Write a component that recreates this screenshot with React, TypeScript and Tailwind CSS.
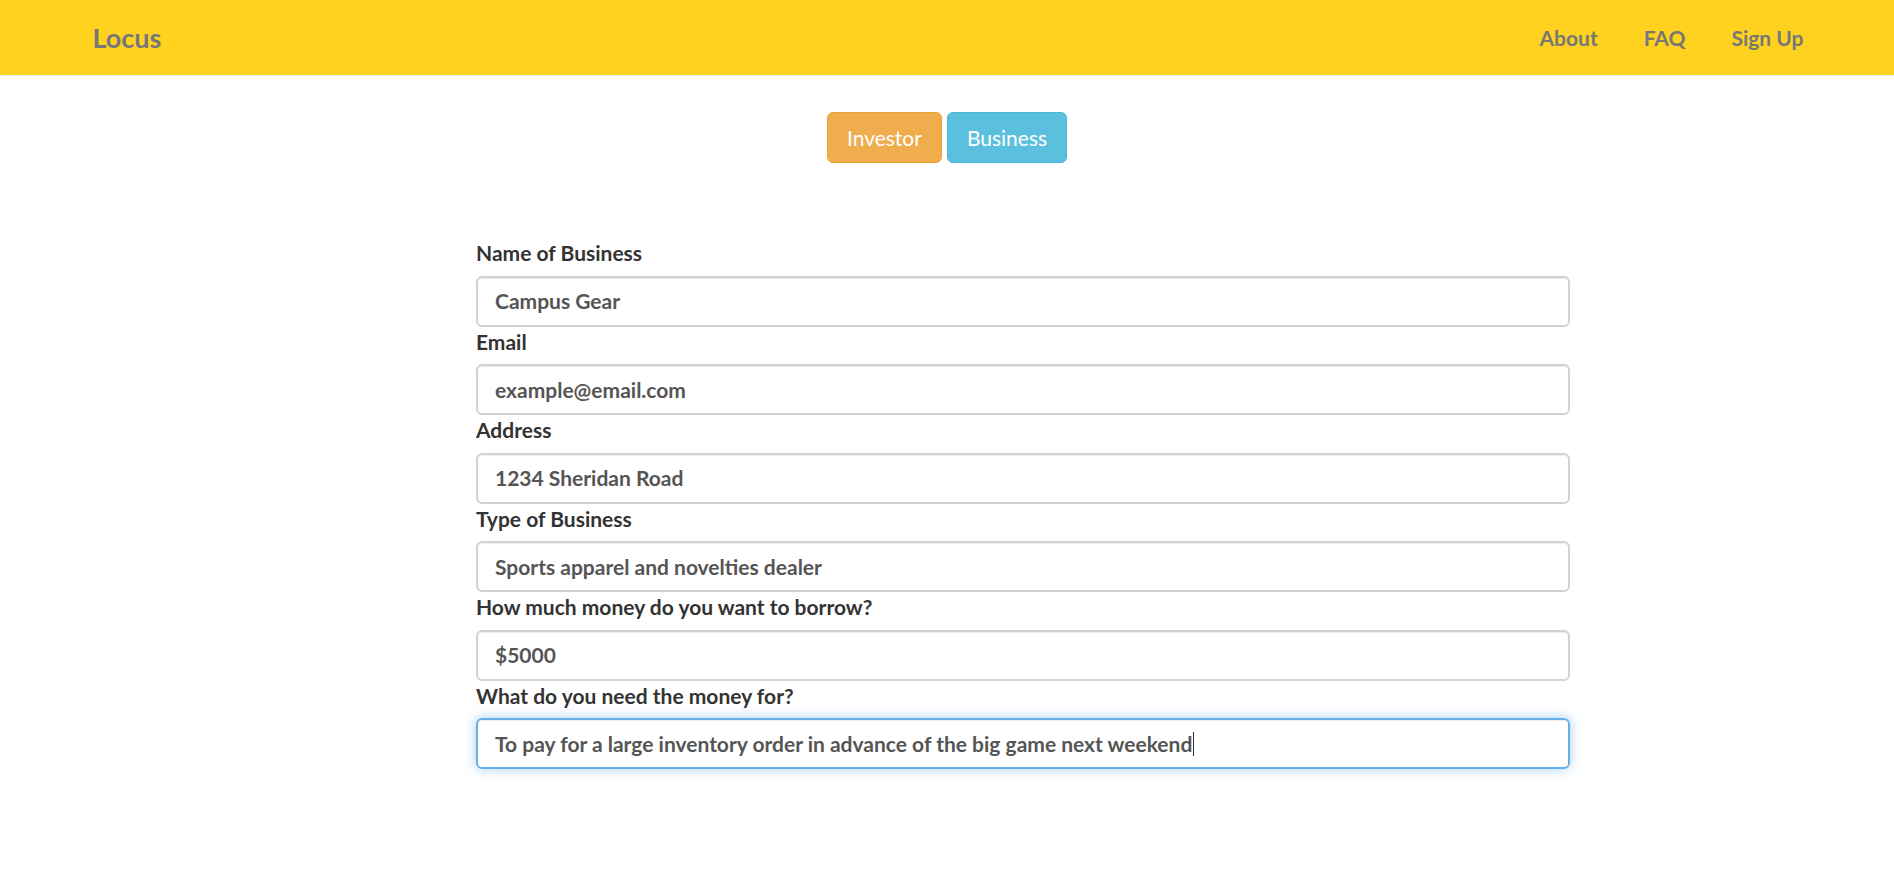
import React from "react";

const fields: { label: string; value: string; focused?: boolean }[] = [
  { label: "Name of Business", value: "Campus Gear" },
  { label: "Email", value: "example@email.com" },
  { label: "Address", value: "1234 Sheridan Road" },
  { label: "Type of Business", value: "Sports apparel and novelties dealer" },
  { label: "How much money do you want to borrow?", value: "$5000" },
  {
    label: "What do you need the money for?",
    value: "To pay for a large inventory order in advance of the big game next weekend",
    focused: true,
  },
];

export default function App() {
  return (
    <div className="min-h-screen bg-white font-['Lato',_'Noto_Sans',_sans-serif]">
      <nav className="h-[76px] bg-[#ffd21f] border-b border-[#e7e7e7]">
        <div className="mx-auto flex h-full w-[1755px] items-center justify-between px-[23px]">
          <a className="text-[27px] font-bold leading-none text-[#777777]">Locus</a>
          <ul className="mr-[-25px] flex items-center">
            {["About", "FAQ", "Sign Up"].map((t) => (
              <li key={t}>
                <a className="block px-[23px] text-[21px] font-bold leading-none text-[#777777]">{t}</a>
              </li>
            ))}
          </ul>
        </div>
      </nav>

      <div className="mt-[36px] flex justify-center gap-[5px]">
        <button className="h-[51px] rounded-[6px] border border-[#eea236] bg-[#f0ad4e] px-[19px] text-[21px] text-white">
          Investor
        </button>
        <button className="h-[51px] rounded-[6px] border border-[#46b8da] bg-[#5bc0de] px-[19px] text-[21px] text-white">
          Business
        </button>
      </div>

      <form className="ml-[476px] mt-[75px] w-[1094px]">
        {fields.map((f) => (
          <div key={f.label}>
            <label className="mb-[7.5px] block text-[21px] font-bold leading-[30px] text-[#333333]">{f.label}</label>
            <div
              className={
                f.focused
                  ? "flex h-[51px] items-center rounded-[6px] border-2 border-[#66afe9] px-[17px] text-[21px] font-bold text-[#555555] shadow-[inset_0_1px_1px_rgba(0,0,0,0.075),0_0_12px_rgba(102,175,233,0.6)]"
                  : "flex h-[51px] items-center rounded-[6px] border-2 border-[#d2d2d2] px-[17px] text-[21px] font-bold text-[#555555] shadow-[inset_0_1px_1px_rgba(0,0,0,0.075)]"
              }
            >
              <span>{f.value}</span>
              {f.focused && <span className="ml-[1px] inline-block h-[24px] w-[1px] bg-[#333333]" />}
            </div>
          </div>
        ))}
      </form>
    </div>
  );
}
